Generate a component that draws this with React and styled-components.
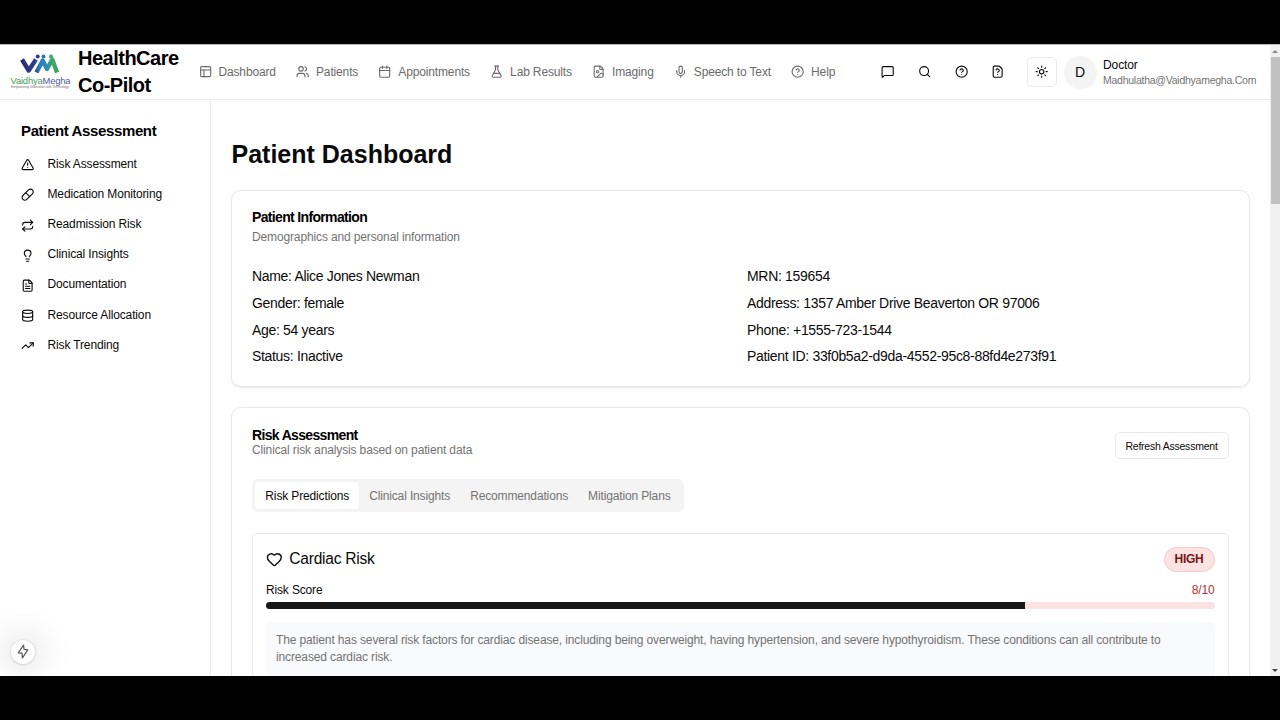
import React, { useState } from "react";
import styled, { createGlobalStyle } from "styled-components";
import {
  PanelsTopLeft,
  Users,
  Calendar,
  FlaskConical,
  FileImage,
  Mic,
  CircleHelp,
  MessageSquare,
  Search,
  FileQuestion,
  Sun,
  TriangleAlert,
  Pill,
  Repeat,
  Lightbulb,
  FileText,
  Database,
  TrendingUp,
  Heart,
} from "lucide-react";

const GlobalStyle = createGlobalStyle`
  * {
    box-sizing: border-box;
  }

  body {
    margin: 0;
    background: #000;
    font-family: "Liberation Sans", Arial, sans-serif;
    color: #0a0a0a;
    overflow: hidden;
  }
`;

const Frame = styled.div`
  height: 720px;
  padding: 44px 0;
  background: #000;
`;

const Screen = styled.div`
  position: relative;
  display: flex;
  height: 632px;
  background: #fff;
  border-top: 1px solid #b9b9b9;
  overflow: hidden;
`;

const Page = styled.div`
  flex: 1;
  min-width: 0;
  display: flex;
  flex-direction: column;
`;

const Header = styled.header`
  height: 55px;
  flex-shrink: 0;
  display: flex;
  align-items: center;
  border-bottom: 1px solid #ebebeb;
  padding-left: 10px;
`;

const Logo = styled.svg`
  width: 62px;
  height: 40px;
  flex-shrink: 0;
`;

const Brand = styled.div`
  width: 115px;
  margin-left: 6px;
  flex-shrink: 0;
  font-size: 20px;
  line-height: 26.67px;
  font-weight: bold;
  letter-spacing: -0.5px;
  color: #000;
`;

const Nav = styled.nav`
  display: flex;
  align-items: center;
  gap: 20.2px;
  margin-left: 5.5px;
`;

const NavItem = styled.a`
  display: flex;
  align-items: center;
  gap: 6.67px;
  font-size: 12px;
  line-height: 16.67px;
  letter-spacing: -0.15px;
  white-space: nowrap;
  color: #6b6b6b;
`;

const Actions = styled.div`
  display: flex;
  align-items: center;
  margin-left: auto;
`;

const IconButton = styled.button`
  width: 30px;
  height: 30px;
  margin-right: ${({ $gap }) => $gap || "6.8px"};
  padding: 0;
  display: flex;
  align-items: center;
  justify-content: center;
  background: #fff;
  color: #0a0a0a;
  border: 1px solid ${({ $outlined }) => ($outlined ? "#ebebeb" : "transparent")};
  border-radius: 5px;
`;

const Avatar = styled.div`
  width: 33px;
  height: 33px;
  border-radius: 50%;
  background: #f4f4f4;
  display: flex;
  align-items: center;
  justify-content: center;
  font-size: 14px;
`;

const Profile = styled.div`
  width: 167px;
  margin-left: 6.5px;
  font-size: 12px;
  line-height: 16px;
  letter-spacing: -0.1px;
`;

const Email = styled.div`
  font-size: 10.5px;
  line-height: 15px;
  letter-spacing: -0.25px;
  color: #737373;
`;

const Body = styled.div`
  flex: 1;
  min-height: 0;
  display: flex;
`;

const Sidebar = styled.aside`
  width: 211px;
  flex-shrink: 0;
  padding: 20px 0 0 21px;
  border-right: 1px solid #ebebeb;
`;

const SidebarTitle = styled.h2`
  margin: 0 0 8px;
  font-size: 15px;
  line-height: 21px;
  letter-spacing: -0.375px;
  color: #000;
`;

const SidebarLink = styled.a`
  height: 30.1px;
  display: flex;
  align-items: center;
  gap: 13.2px;
  font-size: 12px;
  line-height: 16px;
  letter-spacing: -0.14px;

  svg {
    position: relative;
    top: 1px;
  }
`;

const Main = styled.main`
  flex: 1;
  min-width: 0;
  padding: 37px 20.5px 0 20px;
  overflow: hidden;
`;

const PageTitle = styled.h1`
  margin: 0 0 19px 0.5px;
  font-size: 25px;
  line-height: 34px;
  color: #0a0a0a;
`;

const Card = styled.section`
  height: ${({ $height }) => $height};
  margin-bottom: 20px;
  padding: ${({ $top }) => $top || "20px"} 20px 20px;
  border: 1px solid #e8e8e8;
  border-radius: 10px;
  box-shadow: 0 1px 2px rgba(0, 0, 0, 0.1);
`;

const CardTitle = styled.h3`
  margin: 0;
  font-size: 14px;
  line-height: 13.33px;
  letter-spacing: -0.66px;
  color: #000;
`;

const CardText = styled.p`
  margin: ${({ $top }) => $top || "0"} 0 0;
  font-size: 12px;
  line-height: 16.67px;
  letter-spacing: -0.135px;
  color: #737373;
`;

const InfoGrid = styled.div`
  display: grid;
  grid-template-columns: 1fr 1fr;
  column-gap: 13.5px;
  margin-top: 20px;
`;

const InfoRow = styled.div`
  font-size: 14px;
  line-height: 20px;
  letter-spacing: -0.32px;
  margin-bottom: 6.75px;
`;

const CardHeader = styled.div`
  display: flex;
  align-items: center;
  justify-content: space-between;
`;

const RefreshButton = styled.button`
  height: 27px;
  width: 114px;
  margin-top: 3px;
  padding: 0;
  border: 1px solid #e8e8e8;
  border-radius: 5px;
  background: #fff;
  font-family: inherit;
  font-size: 10.5px;
  letter-spacing: -0.23px;
  color: #0a0a0a;
`;

const Tabs = styled.div`
  display: inline-flex;
  height: 33px;
  margin-top: 20px;
  padding: 3.33px;
  border-radius: 6px;
  background: #f4f4f4;
`;

const Tab = styled.button`
  padding: 0 10px;
  border: none;
  border-radius: 4px;
  font-family: inherit;
  font-size: 12px;
  letter-spacing: -0.14px;
  background: ${({ $active }) => ($active ? "#fff" : "transparent")};
  color: ${({ $active }) => ($active ? "#0a0a0a" : "#737373")};
`;

const RiskCard = styled.div`
  height: 200px;
  margin-top: 20.5px;
  padding: 13px 13px;
  border: 1px solid #e8e8e8;
  border-radius: 5px 5px 0 0;
`;

const RiskHeader = styled.div`
  display: flex;
  align-items: center;
  justify-content: space-between;
`;

const RiskTitle = styled.div`
  display: flex;
  align-items: center;
  gap: 6.67px;
  font-size: 15.6px;
  letter-spacing: -0.27px;
`;

const Badge = styled.span`
  height: 25px;
  padding: 0 10px;
  display: flex;
  align-items: center;
  border: 1px solid #f6caca;
  border-radius: 13px;
  background: #fde2e2;
  color: #7a1518;
  font-size: 12px;
  letter-spacing: -0.25px;
  font-weight: bold;
`;

const ScoreRow = styled.div`
  display: flex;
  justify-content: space-between;
  margin-top: 10px;
  font-size: 12px;
  line-height: 16.67px;
  letter-spacing: -0.155px;
`;

const Score = styled.span`
  color: #b3302f;
`;

const Track = styled.div`
  height: 6.67px;
  margin-top: 4px;
  border-radius: 4px;
  background: #fde2e2;
  overflow: hidden;
`;

const Fill = styled.div`
  height: 100%;
  background: #171717;
`;

const Note = styled.p`
  height: 90px;
  margin: 13.5px 0 0;
  padding: 9.5px 10px;
  border-radius: 4px;
  background: #f9fafb;
  font-size: 12px;
  line-height: 16.67px;
  letter-spacing: -0.13px;
  color: #737373;
`;

const Scrollbar = styled.div`
  width: 10px;
  flex-shrink: 0;
  display: flex;
  flex-direction: column;
  align-items: center;
  background: #f0f0f0;
`;

const Arrow = styled.div`
  margin: 5px 0 4px;
  border: 3px solid transparent;
  border-top-width: 0;
  border-bottom-color: #8a8a8a;

  &:last-child {
    margin: auto 0 4px;
    border-width: 3px 3px 0;
    border-top-color: #404040;
  }
`;

const Thumb = styled.div`
  width: 9px;
  height: 147px;
  background: #c1c1c1;
`;

const FloatingButton = styled.button`
  position: absolute;
  left: 11px;
  bottom: 12.5px;
  width: 24px;
  height: 24px;
  padding: 0;
  display: flex;
  align-items: center;
  justify-content: center;
  border: none;
  border-radius: 50%;
  background: #fff;
  color: #555;
  box-shadow: 0 0 0 1px rgba(0, 0, 0, 0.05), 0 1px 3px rgba(0, 0, 0, 0.1),
    0 0 36px rgba(0, 0, 0, 0.28);
`;

const navItems = [
  { label: "Dashboard", icon: PanelsTopLeft },
  { label: "Patients", icon: Users },
  { label: "Appointments", icon: Calendar },
  { label: "Lab Results", icon: FlaskConical },
  { label: "Imaging", icon: FileImage },
  { label: "Speech to Text", icon: Mic },
  { label: "Help", icon: CircleHelp },
];

const sidebarItems = [
  { label: "Risk Assessment", icon: TriangleAlert },
  { label: "Medication Monitoring", icon: Pill },
  { label: "Readmission Risk", icon: Repeat },
  { label: "Clinical Insights", icon: Lightbulb },
  { label: "Documentation", icon: FileText },
  { label: "Resource Allocation", icon: Database },
  { label: "Risk Trending", icon: TrendingUp },
];

const patientInfo = [
  "Name: Alice Jones Newman",
  "MRN: 159654",
  "Gender: female",
  "Address: 1357 Amber Drive Beaverton OR 97006",
  "Age: 54 years",
  "Phone: +1555-723-1544",
  "Status: Inactive",
  "Patient ID: 33f0b5a2-d9da-4552-95c8-88fd4e273f91",
];

const tabs = ["Risk Predictions", "Clinical Insights", "Recommendations", "Mitigation Plans"];

const VaidhyaLogo = () => (
  <Logo viewBox="0 0 62 40">
    <defs>
      <linearGradient id="wave" gradientUnits="userSpaceOnUse" x1="10" y1="0" x2="49" y2="0">
        <stop offset="0" stopColor="#2b2a6c" />
        <stop offset="0.38" stopColor="#2c3f8c" />
        <stop offset="0.5" stopColor="#2f7cc0" />
        <stop offset="0.7" stopColor="#2f8fb0" />
        <stop offset="0.85" stopColor="#3fae5a" />
        <stop offset="1" stopColor="#35a05a" />
      </linearGradient>
    </defs>
    <path
      d="M12 7.5 L18.7 18.5 L26 7.5 M26.5 20.5 L32.7 8.5 L37 17 L42.3 7.5 L47 20.5"
      fill="none"
      stroke="url(#wave)"
      strokeWidth="4.4"
      strokeLinejoin="round"
    />
    <circle cx="27.7" cy="4.4" r="2" fill="#2c3f8c" />
    <circle cx="33.5" cy="4.4" r="2" fill="#2f72b4" />
    <circle cx="41" cy="4.4" r="2" fill="#3fa568" />
    <text x="0.5" y="31.5" fontSize="9.4" textLength="60" fill="#45a05c">
      Vaidhya<tspan fill="#4a5c9c">Megha</tspan>
    </text>
    <text x="1" y="36.3" fontSize="3.4" textLength="58" fill="#777">
      Empowering Innovation with Technology
    </text>
  </Logo>
);

const BoltIcon = () => (
  <svg width="12" height="15" viewBox="0 0 12 15" fill="none" stroke="currentColor" strokeWidth="1.2" strokeLinejoin="round">
    <path d="M6.6 1 L1.3 8.8 L5 9.2 L5.4 14 L10.7 5.8 L7 5.3 Z" />
  </svg>
);

const App = () => {
  const [activeTab, setActiveTab] = useState(tabs[0]);

  return (
    <>
      <GlobalStyle />
      <Frame>
        <Screen>
          <Page>
            <Header>
              <VaidhyaLogo />
              <Brand>HealthCare Co-Pilot</Brand>
              <Nav>
                {navItems.map(({ label, icon: Icon }) => (
                  <NavItem key={label}>
                    <Icon size={13.33} strokeWidth={2} />
                    {label}
                  </NavItem>
                ))}
              </Nav>
              <Actions>
                <IconButton><MessageSquare size={13.33} /></IconButton>
                <IconButton><Search size={13.33} /></IconButton>
                <IconButton><CircleHelp size={13.33} /></IconButton>
                <IconButton $gap="13.5px"><FileQuestion size={13.33} /></IconButton>
                <IconButton $outlined $gap="7px"><Sun size={13.33} /></IconButton>
                <Avatar>D</Avatar>
                <Profile>
                  Doctor
                  <Email>Madhulatha@Vaidhyamegha.Com</Email>
                </Profile>
              </Actions>
            </Header>
            <Body>
              <Sidebar>
                <SidebarTitle>Patient Assessment</SidebarTitle>
                {sidebarItems.map(({ label, icon: Icon }) => (
                  <SidebarLink key={label}>
                    <Icon size={13.33} />
                    {label}
                  </SidebarLink>
                ))}
              </Sidebar>
              <Main>
                <PageTitle>Patient Dashboard</PageTitle>
                <Card $height="197px">
                  <CardTitle>Patient Information</CardTitle>
                  <CardText $top="5px">Demographics and personal information</CardText>
                  <InfoGrid>
                    {patientInfo.map((info) => (
                      <InfoRow key={info}>{info}</InfoRow>
                    ))}
                  </InfoGrid>
                </Card>
                <Card $height="400px" $top="21px">
                  <CardHeader>
                    <div>
                      <CardTitle>Risk Assessment</CardTitle>
                      <CardText>Clinical risk analysis based on patient data</CardText>
                    </div>
                    <RefreshButton>Refresh Assessment</RefreshButton>
                  </CardHeader>
                  <Tabs>
                    {tabs.map((tab) => (
                      <Tab key={tab} $active={tab === activeTab} onClick={() => setActiveTab(tab)}>
                        {tab}
                      </Tab>
                    ))}
                  </Tabs>
                  <RiskCard>
                    <RiskHeader>
                      <RiskTitle>
                        <Heart size={16.67} />
                        Cardiac Risk
                      </RiskTitle>
                      <Badge>HIGH</Badge>
                    </RiskHeader>
                    <ScoreRow>
                      <span>Risk Score</span>
                      <Score>8/10</Score>
                    </ScoreRow>
                    <Track>
                      <Fill style={{ width: "80%" }} />
                    </Track>
                    <Note>
                      The patient has several risk factors for cardiac disease, including being
                      overweight, having hypertension, and severe hypothyroidism. These conditions
                      can all contribute to increased cardiac risk.
                    </Note>
                  </RiskCard>
                </Card>
              </Main>
            </Body>
          </Page>
          <Scrollbar>
            <Arrow />
            <Thumb />
            <Arrow />
          </Scrollbar>
          <FloatingButton>
            <BoltIcon />
          </FloatingButton>
        </Screen>
      </Frame>
    </>
  );
};

export default App;
